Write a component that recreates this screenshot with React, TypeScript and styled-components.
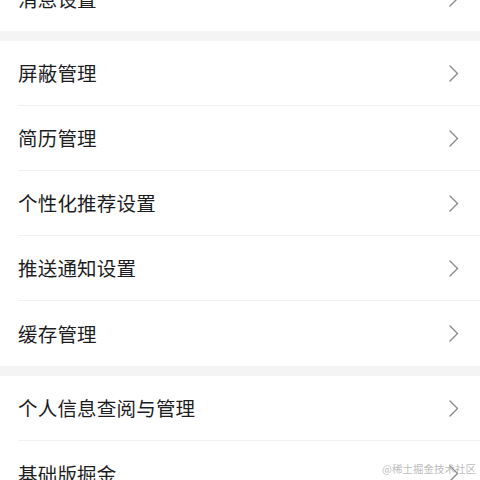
import React from "react";
import styled, { createGlobalStyle } from "styled-components";

const Global = createGlobalStyle`
  html, body { margin: 0; padding: 0; background: #ffffff; }
  body { font-family: "Noto Sans CJK SC", "Noto Sans", sans-serif; overflow: hidden; }
`;

const Page = styled.div`
  width: 480px;
  height: 480px;
  overflow: hidden;
  position: relative;
  background: #ffffff;
`;

const Scroller = styled.div`
  margin-top: -34px;
  display: flex;
  flex-direction: column;
`;

const Group = styled.div`
  background: #ffffff;
  display: flex;
  flex-direction: column;
`;

const Gap = styled.div`
  height: 10px;
  background: #f4f4f5;
`;

const Row = styled.div<{ $last?: boolean }>`
  height: 65px;
  margin-left: 18px;
  padding-right: 21px;
  box-sizing: border-box;
  display: flex;
  align-items: center;
  justify-content: space-between;
  border-bottom: ${(p) => (p.$last ? "none" : "1px solid #f0f0f0")};
`;

const Label = styled.span`
  font-size: 19.5px;
  color: #1d1d1f;
  letter-spacing: 0.2px;
  line-height: 1;
`;

const Chevron = () => (
  <svg width="10" height="17" viewBox="0 0 10 17" fill="none">
    <path d="M1 1 L8.5 8.5 L1 16" stroke="#8a8a8a" strokeWidth="1.4" strokeLinecap="round" strokeLinejoin="round" />
  </svg>
);

const Watermark = styled.div`
  position: absolute;
  right: 4px;
  bottom: 4px;
  font-size: 10.5px;
  color: rgba(170, 170, 170, 0.8);
  font-family: "Noto Sans CJK SC", sans-serif;
`;

const groups: string[][] = [
  ["消息设置"],
  ["屏蔽管理", "简历管理", "个性化推荐设置", "推送通知设置", "缓存管理"],
  ["个人信息查阅与管理", "基础版掘金"],
];

export default function App() {
  return (
    <Page>
      <Global />
      <Scroller>
        {groups.map((g, gi) => (
          <React.Fragment key={gi}>
            {gi > 0 && <Gap />}
            <Group>
              {g.map((item, i) => (
                <Row key={item} $last={i === g.length - 1}>
                  <Label>{item}</Label>
                  <Chevron />
                </Row>
              ))}
            </Group>
          </React.Fragment>
        ))}
      </Scroller>
      <Watermark>@稀土掘金技术社区</Watermark>
    </Page>
  );
}
